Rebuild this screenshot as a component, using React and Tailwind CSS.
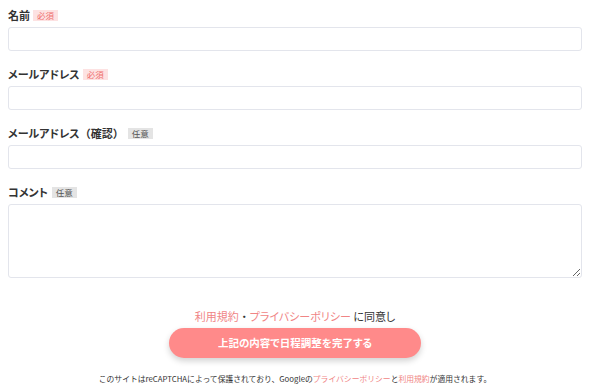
import React from "react";

const font = { fontFamily: '"Noto Sans CJK JP", "Noto Sans", sans-serif' };

const Badge = ({ required }) =>
  required ? (
    <span className="ml-[3px] inline-flex h-[11px] items-center bg-[#fde2e2] px-1 text-[8.5px] leading-none text-[#ef6f6f]">
      必須
    </span>
  ) : (
    <span className="ml-[4px] inline-flex h-[11px] items-center bg-[#e4e4e4] px-1 text-[8.5px] leading-none text-[#555]">
      任意
    </span>
  );

const Field = ({ label, required, textarea }) => (
  <div className="mb-4">
    <div className="mb-[5px] flex h-[14px] items-center">
      <span className="text-[11px] font-bold leading-none text-[#333] [font-feature-settings:'palt']">
        {label}
      </span>
      <Badge required={required} />
    </div>
    {textarea ? (
      <textarea className="block h-[74px] w-full rounded-[3px] border border-[#e3e5ec] bg-white" />
    ) : (
      <input type="text" className="block h-6 w-full rounded-[3px] border border-[#e3e5ec] bg-white" />
    )}
  </div>
);

export default function App() {
  return (
    <div className="min-h-[384px] bg-white pl-2 pr-[18px] pt-2" style={font}>
      <Field label="名前" required />
      <Field label="メールアドレス" required />
      <Field
        label={
          <>
            メールアドレス<span className="[font-feature-settings:normal]">（確認）</span>
          </>
        }
      />
      <Field label="コメント" textarea />

      <div className="mt-[30px] flex flex-col items-center">
        <p className="h-4 text-[11px] leading-4 text-[#333] [font-feature-settings:'palt']">
          <span className="text-[#f08585]">利用規約</span>
          <span className="[font-feature-settings:normal]">・</span>
          <span className="text-[#f08585]">プライバシーポリシー</span> に同意し
        </p>
        <button className="mt-1 h-[30px] w-[252px] rounded-full bg-[#ff8a8a] text-[10.5px] font-bold text-white shadow-[0_3px_6px_rgba(0,0,0,0.18)] [font-feature-settings:'palt']">
          上記の内容で日程調整を完了する
        </button>
        <p className="mt-[15px] text-[7.8px] leading-3 text-[#333]">
          このサイトはreCAPTCHAによって保護されており、Googleの
          <span className="text-[#f08585]">プライバシーポリシー</span>と
          <span className="text-[#f08585]">利用規約</span>が適用されます。
        </p>
      </div>
    </div>
  );
}
